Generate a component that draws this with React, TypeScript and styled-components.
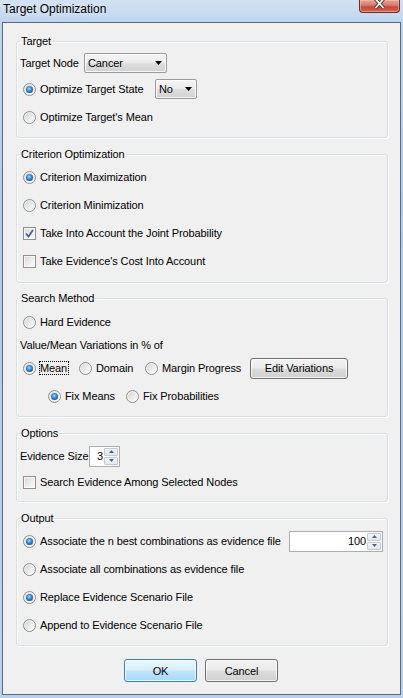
import React from 'react';
import styled, { createGlobalStyle } from 'styled-components';

const GlobalStyle = createGlobalStyle`
  html, body { margin: 0; padding: 0; width: 403px; height: 698px; overflow: hidden; background: #bcd3ec; }
  body { font-family: "Liberation Sans", Arial, sans-serif; font-size: 11px; color: #000; letter-spacing: -0.1px; }
  * { box-sizing: border-box; }
`;

const Window = styled.div`
  width: 403px;
  height: 698px;
  display: flex;
  flex-direction: column;
  padding: 0 2px 3px 2px;
  background: linear-gradient(180deg, #d3e2f3 0px, #bfd5ee 22px, #b2cbe8 200px, #b9d0ea 698px);
`;

const TitleBar = styled.div`
  height: 22px;
  flex: none;
  display: flex;
  align-items: flex-start;
  justify-content: space-between;
`;

const Title = styled.div`
  padding: 1px 0 0 1px;
  font-size: 12px;
  line-height: 16px;
  letter-spacing: 0;
  color: #000;
  text-shadow: 0 0 6px rgba(255, 255, 255, 0.9);
`;

const CloseButton = styled.div`
  width: 41px;
  height: 13px;
  margin-right: 1px;
  border: 1px solid #6e2b24;
  border-top: none;
  border-radius: 0 0 4px 4px;
  background: linear-gradient(180deg, #e6a496 0%, #d98070 40%, #c34a3b 60%, #cf6757 100%);
  box-shadow: inset 0 0 0 1px rgba(255, 200, 190, 0.5);
  display: flex;
  align-items: flex-start;
  justify-content: center;
`;

const Client = styled.div`
  flex: 1;
  border: 1px solid #5f6b77;
  background: #f0f0f0;
  padding: 11px 12px 0 13px;
  display: flex;
  flex-direction: column;
`;

const Group = styled.fieldset<{ $mt?: number; $pt: number; $pb: number }>`
  margin: ${(p) => p.$mt ?? 0}px 0 0 0;
  padding: ${(p) => p.$pt}px 4px ${(p) => p.$pb}px 3px;
  border: 1px solid #d5dfe5;
  border-radius: 3px;
  box-shadow: 1px 1px 0 #fff, inset 1px 1px 0 #fff;
  min-width: 0;
  display: flex;
  flex-direction: column;
`;

const Legend = styled.legend`
  padding: 0 1px;
  font-size: 11px;
  line-height: 14px;
  color: #000;
`;

const Row = styled.div<{ $h: number; $indent?: number }>`
  height: ${(p) => p.$h}px;
  display: flex;
  align-items: center;
  padding-left: ${(p) => p.$indent ?? 0}px;
`;

const Label = styled.span<{ $w?: number }>`
  white-space: nowrap;
  ${(p) => (p.$w ? `width: ${p.$w}px; flex: none;` : '')}
`;

const Option = styled.label<{ $w?: number }>`
  display: inline-flex;
  align-items: center;
  gap: 4px;
  white-space: nowrap;
  ${(p) => (p.$w ? `width: ${p.$w}px; flex: none;` : '')}
`;

const RadioCircle = styled.span<{ $on?: boolean }>`
  width: 13px;
  height: 13px;
  flex: none;
  border-radius: 50%;
  border: 1px solid #8e8f8f;
  background: linear-gradient(135deg, #d2d2d2 0%, #ececec 55%, #fcfcfc 100%);
  box-shadow: inset 0 0 0 1px rgba(255, 255, 255, 0.6);
  display: flex;
  align-items: center;
  justify-content: center;
  &::after {
    content: '';
    display: ${(p) => (p.$on ? 'block' : 'none')};
    width: 7px;
    height: 7px;
    border-radius: 50%;
    background: radial-gradient(circle at 45% 40%, #b4e0ff 0%, #3d94d8 35%, #17529a 75%, #123865 100%);
  }
`;

const CheckBox = styled.span`
  width: 13px;
  height: 13px;
  flex: none;
  border: 1px solid #8e8f8f;
  background: linear-gradient(135deg, #d8d8d8 0%, #ededed 55%, #fbfbfb 100%);
  box-shadow: inset 0 0 0 1px rgba(255, 255, 255, 0.7);
  display: flex;
  align-items: center;
  justify-content: center;
`;

const Focus = styled.span`
  border: 1px dotted #000;
  padding: 0 1px 0 0;
  margin-left: -1px;
  line-height: 12px;
`;

const Combo = styled.div<{ $w: number }>`
  width: ${(p) => p.$w}px;
  height: 20px;
  flex: none;
  border: 1px solid #9a9a9a;
  border-radius: 2px;
  background: linear-gradient(180deg, #f4f4f4 0%, #ececec 48%, #dedede 52%, #d2d2d2 100%);
  box-shadow: inset 0 0 0 1px rgba(255, 255, 255, 0.8);
  display: flex;
  align-items: center;
  justify-content: space-between;
  padding: 0 4px 0 3px;
`;

const Spinner = styled.div<{ $w: number }>`
  width: ${(p) => p.$w}px;
  height: 21px;
  flex: none;
  border: 1px solid #abadb3;
  background: #fff;
  display: flex;
  align-items: stretch;
  padding: 1px;
`;

const SpinValue = styled.span`
  flex: 1;
  display: flex;
  align-items: center;
  justify-content: flex-end;
  padding-right: 1px;
`;

const SpinButtons = styled.div`
  width: 14px;
  display: flex;
  flex-direction: column;
  gap: 1px;
`;

const SpinButton = styled.div`
  flex: 1;
  border: 1px solid #c4cad2;
  border-radius: 1px;
  background: linear-gradient(180deg, #f3f5f8 0%, #e3e8ee 100%);
  display: flex;
  align-items: center;
  justify-content: center;
`;

const PushButton = styled.button<{ $w: number; $h: number; $primary?: boolean }>`
  width: ${(p) => p.$w}px;
  height: ${(p) => p.$h}px;
  flex: none;
  margin: 0;
  padding: 0;
  font-family: "Liberation Sans", Arial, sans-serif;
  font-size: 11px;
  letter-spacing: -0.1px;
  color: #000;
  border: 1px solid ${(p) => (p.$primary ? '#3c7fb1' : '#707070')};
  border-radius: 3px;
  background: ${(p) =>
    p.$primary
      ? 'linear-gradient(180deg, #eaf6fd 0%, #d9f0fc 48%, #bee6fd 52%, #a7d9f5 100%)'
      : 'linear-gradient(180deg, #f2f2f2 0%, #ebebeb 48%, #dddddd 52%, #cfcfcf 100%)'};
  box-shadow: inset 0 0 0 1px rgba(255, 255, 255, 0.75);
`;

const ButtonBar = styled.div`
  margin-top: 13px;
  padding-right: 2px;
  display: flex;
  justify-content: center;
  gap: 8px;
`;

const Radio = ({ on, children, w }: { on?: boolean; children: React.ReactNode; w?: number }) => (
  <Option $w={w}>
    <RadioCircle $on={on} />
    {children}
  </Option>
);

const Check = ({ on, children }: { on?: boolean; children: React.ReactNode }) => (
  <Option>
    <CheckBox>
      {on && (
        <svg width="9" height="9" viewBox="0 0 9 9">
          <path d="M1 4.5 L3.5 7.5 L8 1" fill="none" stroke="#4a5f97" strokeWidth="1.8" />
        </svg>
      )}
    </CheckBox>
    {children}
  </Option>
);

const DownArrow = () => (
  <svg width="7" height="4" viewBox="0 0 7 4">
    <polygon points="0,0 7,0 3.5,4" fill="#000" />
  </svg>
);

const SpinArrow = ({ up }: { up?: boolean }) => (
  <svg width="5" height="3" viewBox="0 0 5 3">
    <polygon points={up ? '0,3 5,3 2.5,0' : '0,0 5,0 2.5,3'} fill="#4d6185" />
  </svg>
);

const SpinBox = ({ value, w }: { value: string; w: number }) => (
  <Spinner $w={w}>
    <SpinValue>{value}</SpinValue>
    <SpinButtons>
      <SpinButton>
        <SpinArrow up />
      </SpinButton>
      <SpinButton>
        <SpinArrow />
      </SpinButton>
    </SpinButtons>
  </Spinner>
);

export default function App() {
  return (
    <>
      <GlobalStyle />
      <Window>
        <TitleBar>
          <Title>Target Optimization</Title>
          <CloseButton>
            <svg width="11" height="9" viewBox="0 0 11 9">
              <path d="M1.5 -1 L9.5 8 M9.5 -1 L1.5 8" stroke="#4a2620" strokeWidth="3.4" />
              <path d="M1.5 -1 L9.5 8 M9.5 -1 L1.5 8" stroke="#fff" strokeWidth="1.8" />
            </svg>
          </CloseButton>
        </TitleBar>
        <Client>
          <Group $pt={2} $pb={5}>
            <Legend>Target</Legend>
            <Row $h={26}>
              <Label $w={64}>Target Node</Label>
              <Combo $w={83}>
                <span>Cancer</span>
                <DownArrow />
              </Combo>
            </Row>
            <Row $h={26} $indent={3}>
              <Radio on w={132}>Optimize Target State</Radio>
              <Combo $w={42}>
                <span>No</span>
                <DownArrow />
              </Combo>
            </Row>
            <Row $h={30} $indent={3}>
              <Radio>Optimize Target's Mean</Radio>
            </Row>
          </Group>

          <Group $mt={9} $pt={2} $pb={7}>
            <Legend>Criterion Optimization</Legend>
            <Row $h={28} $indent={3}>
              <Radio on>Criterion Maximization</Radio>
            </Row>
            <Row $h={28} $indent={3}>
              <Radio>Criterion Minimization</Radio>
            </Row>
            <Row $h={28} $indent={3}>
              <Check on>Take Into Account the Joint Probability</Check>
            </Row>
            <Row $h={28} $indent={3}>
              <Check>Take Evidence's Cost Into Account</Check>
            </Row>
          </Group>

          <Group $mt={8} $pt={3} $pb={6}>
            <Legend>Search Method</Legend>
            <Row $h={28} $indent={3}>
              <Radio>Hard Evidence</Radio>
            </Row>
            <Row $h={18}>
              <Label>Value/Mean Variations in % of</Label>
            </Row>
            <Row $h={28} $indent={3}>
              <Radio on w={56}>
                <Focus>Mean</Focus>
              </Radio>
              <Radio w={66}>Domain</Radio>
              <Radio w={105}>Margin Progress</Radio>
              <PushButton $w={98} $h={21}>Edit Variations</PushButton>
            </Row>
            <Row $h={28} $indent={28}>
              <Radio on w={78}>Fix Means</Radio>
              <Radio>Fix Probabilities</Radio>
            </Row>
          </Group>

          <Group $mt={9} $pt={4} $pb={5}>
            <Legend>Options</Legend>
            <Row $h={24}>
              <Label $w={69}>Evidence Size</Label>
              <SpinBox value="3" w={31} />
            </Row>
            <Row $h={28} $indent={3}>
              <Check>Search Evidence Among Selected Nodes</Check>
            </Row>
          </Group>

          <Group $mt={9} $pt={2} $pb={6}>
            <Legend>Output</Legend>
            <Row $h={28} $indent={3}>
              <Radio on w={266}>Associate the n best combinations as evidence file</Radio>
              <SpinBox value="100" w={94} />
            </Row>
            <Row $h={28} $indent={3}>
              <Radio>Associate all combinations as evidence file</Radio>
            </Row>
            <Row $h={28} $indent={3}>
              <Radio on>Replace Evidence Scenario File</Radio>
            </Row>
            <Row $h={28} $indent={3}>
              <Radio>Append to Evidence Scenario File</Radio>
            </Row>
          </Group>

          <ButtonBar>
            <PushButton $w={73} $h={23} $primary>OK</PushButton>
            <PushButton $w={73} $h={23}>Cancel</PushButton>
          </ButtonBar>
        </Client>
      </Window>
    </>
  );
}
